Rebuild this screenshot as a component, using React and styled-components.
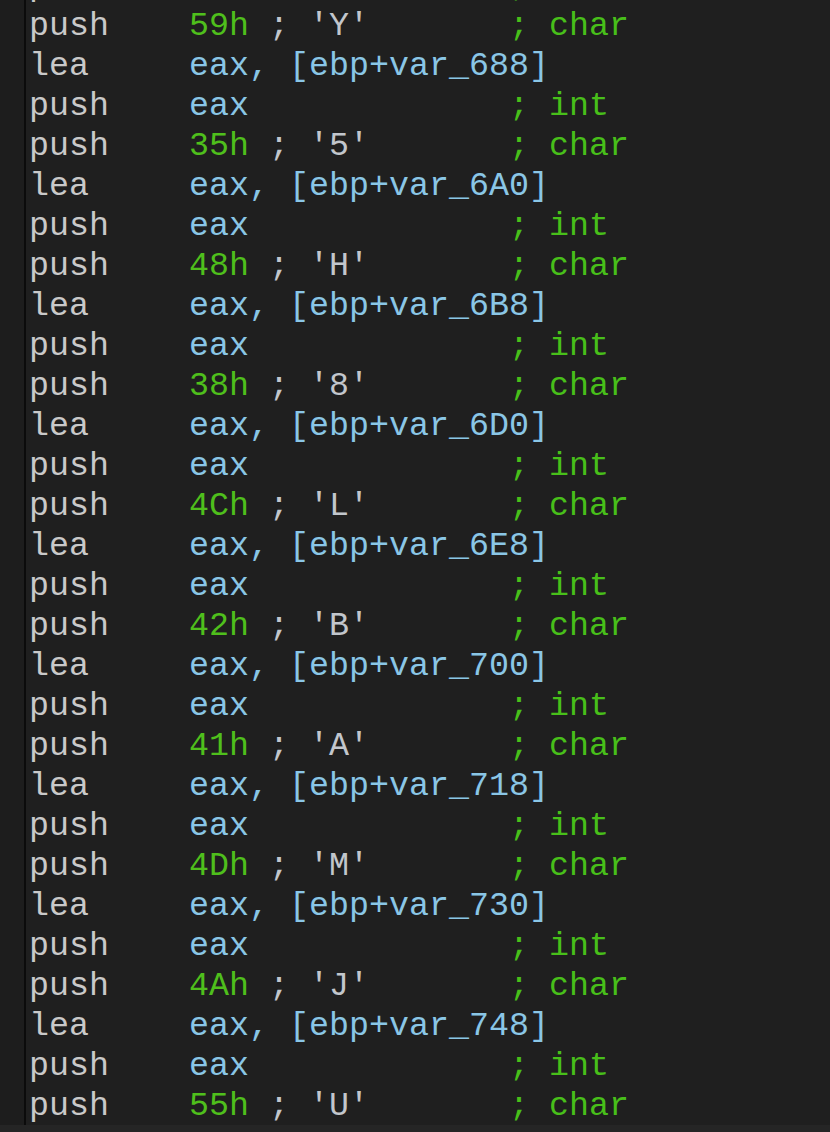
import React from 'react';
import styled, { createGlobalStyle } from 'styled-components';

const letters = [
  ['59h', 'Y', '688'],
  ['35h', '5', '6A0'],
  ['48h', 'H', '6B8'],
  ['38h', '8', '6D0'],
  ['4Ch', 'L', '6E8'],
  ['42h', 'B', '700'],
  ['41h', 'A', '718'],
  ['4Dh', 'M', '730'],
  ['4Ah', 'J', '748'],
  ['55h', 'U', null],
];

const buildLines = () => {
  const lines = [{ kind: 'pushReg' }];
  letters.forEach(([hex, ch, slot]) => {
    lines.push({ kind: 'pushChar', hex, ch });
    if (slot) {
      lines.push({ kind: 'lea', slot });
      lines.push({ kind: 'pushReg' });
    }
  });
  return lines;
};

const Line = ({ line }) => {
  if (line.kind === 'pushChar') {
    return (
      <Row>
        <Mnemonic>{'push    '}</Mnemonic>
        <Number>{line.hex}</Number>
        <Plain>{` ; '${line.ch}'       `}</Plain>
        <Comment>; char</Comment>
      </Row>
    );
  }
  if (line.kind === 'lea') {
    return (
      <Row>
        <Mnemonic>{'lea     '}</Mnemonic>
        <Operand>{`eax, [ebp+var_${line.slot}]`}</Operand>
      </Row>
    );
  }
  return (
    <Row>
      <Mnemonic>{'push    '}</Mnemonic>
      <Operand>eax</Operand>
      <Plain>{'             '}</Plain>
      <Comment>; int</Comment>
    </Row>
  );
};

const App = () => {
  const lines = buildLines();
  return (
    <>
      <GlobalStyle />
      <Window>
        <Listing>
          <Gutter />
          <Divider />
          <Code>
            {lines.map((line, index) => (
              <Line line={line} key={`line-${index}`} />
            ))}
          </Code>
        </Listing>
        <BottomBar />
      </Window>
    </>
  );
};

const GlobalStyle = createGlobalStyle`
  html, body {
    margin: 0;
    padding: 0;
    background: #1f1f1f;
  }
`;

const Window = styled.div`
  width: 830px;
  height: 1132px;
  display: flex;
  flex-direction: column;
  overflow: hidden;
  background: #1f1f1f;
`;

const Listing = styled.div`
  flex: 1;
  display: flex;
  overflow: hidden;
`;

const Gutter = styled.div`
  width: 24px;
  flex-shrink: 0;
  background: #1d1d1d;
`;

const Divider = styled.div`
  width: 2px;
  flex-shrink: 0;
  background: #0b0b0b;
`;

const Code = styled.div`
  flex: 1;
  padding-left: 3px;
  margin-top: -34px;
  font-family: 'Liberation Mono', 'Courier New', monospace;
  font-size: 33.33px;
  line-height: 40px;
  white-space: pre;
`;

const Row = styled.div`
  height: 40px;
`;

const Mnemonic = styled.span`
  color: #c9c9c9;
`;

const Operand = styled.span`
  color: #8ac6e6;
`;

const Number = styled.span`
  color: #4fbf1c;
`;

const Plain = styled.span`
  color: #c2c6cc;
`;

const Comment = styled.span`
  color: #48bf1a;
`;

const BottomBar = styled.div`
  height: 7px;
  flex-shrink: 0;
  background: #252525;
`;

export default App;
